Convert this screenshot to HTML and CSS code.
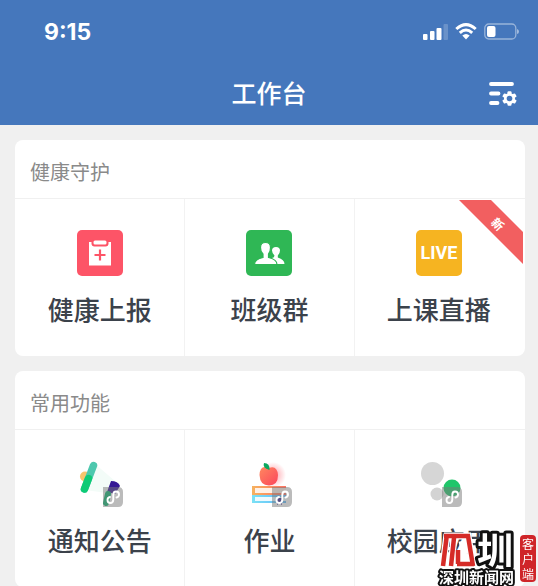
FILE: index.html
```html
<!DOCTYPE html>
<html lang="zh-CN">
<head>
<meta charset="utf-8">
<meta name="viewport" content="width=device-width, initial-scale=1">
<title>工作台</title>
<link rel="stylesheet" href="styles.css">
</head>
<body>
<header class="topbar">
  <div class="status">
    <time class="clock">9:15</time>
    <div class="indicators">
      <svg width="25" height="16" viewBox="0 0 25 16" fill="#fff" aria-hidden="true">
        <rect x="0" y="10" width="4.500" height="6" rx="1"/><rect x="7" y="7" width="4.500" height="9" rx="1"/><rect x="13.500" y="4" width="5" height="12" rx="1"/><rect x="20.500" y="0" width="4.500" height="16" rx="1" opacity=".2"/>
      </svg>
      <svg width="22" height="17" viewBox="0 0 22 17" aria-hidden="true">
        <path d="M1.300 6Q11-2.800 20.700 6M4.800 9.800Q11 4.300 17.200 9.800" fill="none" stroke="#fff" stroke-width="3"/>
        <path d="M7.300 12.500Q11 9.500 14.700 12.500L11 16.500Z" fill="#fff"/>
      </svg>
      <svg width="35" height="17" viewBox="0 0 35 17" aria-hidden="true">
        <rect x=".8" y="1" width="31" height="15" rx="4" fill="none" stroke="#fff" stroke-opacity=".45" stroke-width="1.300"/>
        <rect x="3" y="3" width="8.500" height="11" rx="2" fill="#fff"/>
        <path d="M33 6q2 .5 2 2.500t-2 2.500Z" fill="#fff" opacity=".5"/>
      </svg>
    </div>
  </div>
  <div class="titlebar">
    <h1>工作台</h1>
    <button class="manage" type="button" aria-label="管理">
      <svg width="28" height="26" viewBox="0 0 28 26" aria-hidden="true">
        <path d="M2 3H23M2 12.500H9.500M2 22H8.500" stroke="#fff" stroke-width="3.800" stroke-linecap="round" fill="none"/>
        <g fill="#fff" transform="translate(20.500 17.500)">
          <circle r="5.500"/>
          <rect x="-2" y="-7.300" width="4" height="14.600" rx="1"/><rect x="-2" y="-7.300" width="4" height="14.600" rx="1" transform="rotate(60)"/><rect x="-2" y="-7.300" width="4" height="14.600" rx="1" transform="rotate(120)"/>
        </g>
        <circle cx="20.500" cy="17.500" r="2.800" fill="#4577bc"/>
      </svg>
    </button>
  </div>
</header>

<main class="content">
  <section class="card">
    <h2>健康守护</h2>
    <div class="grid">
      <a class="tile" href="#report">
        <svg class="icon" viewBox="0 0 46 46" aria-hidden="true">
          <rect width="46" height="46" rx="5" fill="#fd5467"/>
          <path d="M12 12H34V35.500H12Z" fill="#fff"/>
          <rect x="14.500" y="9" width="17" height="7.500" rx="3" fill="#fd5467"/>
          <rect x="16.500" y="10.500" width="13" height="4" rx="1.500" fill="#fff"/>
          <path d="M23 19.500V30.500M17.500 25H28.500" stroke="#fd5467" stroke-width="2.200"/>
        </svg>
        <span>健康上报</span>
      </a>
      <a class="tile" href="#class">
        <svg class="icon" viewBox="0 0 46 46" aria-hidden="true">
          <rect width="46" height="46" rx="5" fill="#2fb755"/>
          <path d="M27 34L26 28Q28.500 27.500 28.500 25.500Q26 23 26 20.500Q26 17 30 17T34 20.500Q34 23.500 31.800 25.500V27.500Q38.500 29.500 38.500 34Z" fill="#fff"/>
          <path d="M8.500 34.500Q8.500 29.500 17 27.500V24Q14.500 22 14.500 17.500Q14.500 12.500 19.500 12.500T24.500 17.500Q24.500 22 22.500 24V27.500Q31 29.500 31 34.500Z" fill="#fff" stroke="#2fb755" stroke-width="1.200"/>
        </svg>
        <span>班级群</span>
      </a>
      <a class="tile" href="#live">
        <svg class="icon" viewBox="0 0 46 46" aria-hidden="true">
          <rect width="46" height="46" rx="5" fill="#f6b421"/>
          <text class="live" x="23" y="29" text-anchor="middle">LIVE</text>
        </svg>
        <span>上课直播</span>
        <svg class="ribbon" width="64" height="64" viewBox="0 0 64 64" role="img" aria-label="新">
          <path d="M0 0H32L64 32V64Z" fill="#f25f60"/>
          <text class="new" x="0" y="5" text-anchor="middle" transform="translate(39 24) rotate(45)">新</text>
        </svg>
      </a>
    </div>
  </section>

  <section class="card">
    <h2>常用功能</h2>
    <div class="grid">
      <a class="tile" href="#notice">
        <svg class="icon" viewBox="0 0 46 46" aria-hidden="true">
          <path d="M17 2L38 20L30 32L8 29Z" fill="#f3fcf8"/>
          <circle cx="8" cy="15.500" r="5" fill="#f7c56d"/>
          <path d="M16.500 4.500L7.500 28" stroke="#4dc8ae" stroke-width="7.500" stroke-linecap="round"/>
          <path d="M11.500 17.500L7.500 28" stroke="#0dcb76" stroke-width="7.500" stroke-linecap="round"/>
          <path d="M34 20Q41 20 43 25L38 33L30 31Z" fill="#351895"/>
          <path d="M31 33L29 42" stroke="#0bb570" stroke-width="6" stroke-linecap="round"/>
          <path d="M26 26H41Q46 26 46 31V41Q46 46 41 46H26Z" fill="#777" fill-opacity=".5"/>
          <path d="M33 36Q30.500 36.500 30.500 39Q30.500 42 33.300 42Q36.300 42 36.300 38.500V34Q36.300 30.500 39 30.500Q42 30.500 42 33.500Q42 36 39.500 36.500" fill="none" stroke="#fff" stroke-width="1.900" stroke-linecap="round"/>
        </svg>
        <span>通知公告</span>
      </a>
      <a class="tile" href="#homework">
        <svg class="icon" viewBox="0 0 46 46" aria-hidden="true">
          <defs>
            <radialGradient id="glow"><stop stop-color="#ff5967" stop-opacity=".6"/><stop offset="1" stop-color="#ff5967" stop-opacity="0"/></radialGradient>
            <linearGradient id="apple" x2="1" y2="1"><stop stop-color="#ff885f"/><stop offset="1" stop-color="#fb455c"/></linearGradient>
            <linearGradient id="orange"><stop stop-color="#f6b25f"/><stop offset="1" stop-color="#ff7464"/></linearGradient>
            <linearGradient id="blue"><stop stop-color="#7be1f5"/><stop offset="1" stop-color="#62b8fa"/></linearGradient>
          </defs>
          <circle cx="27" cy="14" r="13" fill="url(#glow)"/>
          <path d="M23 7Q14 3 13.500 14Q14 24.500 23 24.500Q32 24.500 32 14Q31 4 23 7Z" fill="url(#apple)"/>
          <path d="M23.500 9Q16 7 18 2Q24 2 23.500 9Z" fill="#08a85f"/>
          <path d="M6 25H40V27H9V32H40V34H6Z" fill="url(#orange)"/>
          <path d="M9 27H40V32H9Z" fill="#fff1e6"/>
          <path d="M6 34H40V36H9V40H40V42H6Z" fill="url(#blue)"/>
          <path d="M9 36H40V40H9Z" fill="#eefaff"/>
          <path d="M31 37H36V44L33.500 42L31 44Z" fill="#30208a"/>
          <path d="M26 26H41Q46 26 46 31V41Q46 46 41 46H26Z" fill="#777" fill-opacity=".5"/>
          <path d="M33 36Q30.500 36.500 30.500 39Q30.500 42 33.300 42Q36.300 42 36.300 38.500V34Q36.300 30.500 39 30.500Q42 30.500 42 33.500Q42 36 39.500 36.500" fill="none" stroke="#fff" stroke-width="1.900" stroke-linecap="round"/>
        </svg>
        <span>作业</span>
      </a>
      <a class="tile" href="#apps">
        <svg class="icon" viewBox="0 0 46 46" aria-hidden="true">
          <circle cx="16.500" cy="12.500" r="11.500" fill="#d6d6d6"/>
          <circle cx="21" cy="33" r="6.500" fill="#d3d3d3"/>
          <circle cx="36" cy="27" r="8.500" fill="#20c66a"/>
          <path d="M26 26H41Q46 26 46 31V41Q46 46 41 46H26Z" fill="#777" fill-opacity=".5"/>
          <path d="M33 36Q30.500 36.500 30.500 39Q30.500 42 33.300 42Q36.300 42 36.300 38.500V34Q36.300 30.500 39 30.500Q42 30.500 42 33.500Q42 36 39.500 36.500" fill="none" stroke="#fff" stroke-width="1.900" stroke-linecap="round"/>
        </svg>
        <span>校园应用</span>
      </a>
    </div>
  </section>
</main>

<aside class="brand" aria-label="深圳新闻网客户端">
  <svg width="102" height="56" viewBox="0 0 102 56">
    <g fill="none">
      <path d="M11 4L7 36M8 6H32L37 36M18 8L15 36M21 34H38M22 20V34M26 11L29 24" stroke="#fff" stroke-width="7"/>
      <path d="M11 4L7 36M8 6H32L37 36M18 8L15 36M21 34H38M22 20V34" stroke="#d52b27" stroke-width="4.500"/>
    </g>
    <text class="mark" x="41" y="34">圳</text>
    <text class="site" x="3" y="53">深圳新闻网</text>
    <rect x="84" y="5" width="16" height="47" rx="4" fill="#cf2529"/>
    <text class="client" text-anchor="middle"><tspan x="92" y="19">客</tspan><tspan x="92" y="34">户</tspan><tspan x="92" y="49">端</tspan></text>
  </svg>
</aside>
</body>
</html>
```
FILE: styles.css
```css
* { box-sizing: border-box; }

body {
  margin: 0;
  height: 100vh;
  overflow: hidden;
  background: #f0f0f0;
  color: #3b424b;
  font-family: "Liberation Sans", "Noto Sans CJK SC", sans-serif;
}

.topbar {
  height: 125px;
  padding: 0 19px;
  background: #4577bc;
  color: #fff;
}

.status {
  display: flex;
  align-items: center;
  justify-content: space-between;
  height: 63px;
  padding-left: 25px;
}

.clock {
  font: 700 23px/24px Inter, sans-serif;
}

.indicators {
  display: flex;
  align-items: center;
  gap: 7px;
}

.titlebar {
  display: grid;
  grid-template-columns: 30px 1fr 30px;
  align-items: center;
  height: 62px;
}

.titlebar h1 {
  grid-column: 2;
  margin: 0;
  text-align: center;
  font-size: 25px;
  font-weight: 500;
  line-height: 32px;
}

.manage {
  display: flex;
  padding: 0;
  border: 0;
  background: none;
}

.content {
  display: flex;
  flex-direction: column;
  gap: 15px;
  padding: 15px 13px 15px 15px;
}

.card {
  overflow: hidden;
  border-radius: 8px;
  background: #fff;
}

.card h2 {
  margin: 0;
  padding: 20px 15px 12px;
  border-bottom: 1px solid #f0f0f0;
  color: #8a8a8a;
  font-size: 20px;
  font-weight: 400;
  line-height: 26px;
}

.grid {
  display: grid;
  grid-template-columns: repeat(3, 1fr);
  padding-right: 2px;
}

.tile {
  position: relative;
  display: flex;
  flex-direction: column;
  align-items: center;
  gap: 15px;
  height: 157px;
  padding-top: 31px;
  color: inherit;
  font-size: 26px;
  font-weight: 500;
  line-height: 40px;
  text-decoration: none;
}

.tile + .tile { border-left: 1px solid #f2f2f2; }

.icon {
  width: 46px;
  height: 46px;
}

.live {
  fill: #fff;
  font: 700 18px Roboto, sans-serif;
}

.ribbon {
  position: absolute;
  top: 1px;
  right: 0;
}

.new {
  fill: #fff;
  font-size: 12px;
  font-weight: 700;
}

.brand {
  position: fixed;
  right: 0;
  bottom: 0;
  line-height: 0;
}

.mark,
.site {
  fill: #fff;
  stroke: #111;
  paint-order: stroke;
  stroke-linejoin: round;
  font-weight: 700;
}

.mark {
  stroke-width: 6px;
  font-size: 36px;
}

.site {
  stroke-width: 4px;
  font-size: 15px;
}

.client {
  fill: #fff;
  font-family: "Noto Sans CJK SC", sans-serif;
  font-size: 12px;
}
```
